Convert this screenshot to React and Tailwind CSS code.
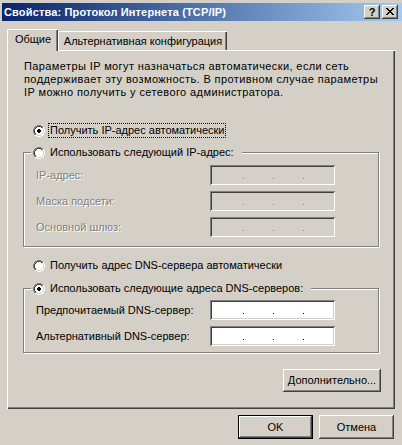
import React from 'react'

const raised = 'shadow-[inset_-1px_-1px_0_#404040,inset_1px_1px_0_#ffffff,inset_-2px_-2px_0_#808080]'
const sunken = 'shadow-[inset_1px_1px_0_#808080,inset_-1px_-1px_0_#ffffff,inset_2px_2px_0_#404040,inset_-2px_-2px_0_#d4d0c8]'
const etched = 'border border-[#808080] shadow-[inset_1px_1px_0_#ffffff,1px_1px_0_#ffffff]'
const grayText = 'text-[#808080] [text-shadow:1px_1px_0_#ffffff]'

// classic 12x12 radio, drawn pixel by pixel
function Radio({ checked }) {
  const px = []
  for (let y = 0; y < 12; y++) {
    for (let x = 0; x < 12; x++) {
      const dx = x + 0.5 - 6
      const dy = y + 0.5 - 6
      const d = Math.sqrt(dx * dx + dy * dy)
      if (d > 6) continue
      const tl = dx + dy <= 0
      let c
      if (d > 4.9) c = tl ? '#808080' : '#ffffff'
      else if (d > 3.9) c = tl ? '#404040' : '#d4d0c8'
      else c = checked && d < 2 ? '#000000' : '#ffffff'
      px.push(<rect key={y * 12 + x} x={x} y={y} width="1" height="1" fill={c} />)
    }
  }
  return (
    <svg width="12" height="12" viewBox="0 0 12 12" shapeRendering="crispEdges" className="shrink-0">
      {px}
    </svg>
  )
}

function RadioRow({ checked, focus, children, className = '' }) {
  return (
    <div className={`flex items-center h-[15px] ${className}`}>
      <Radio checked={checked} />
      <span
        className={`ml-[3px] px-px leading-[13px] border ${focus ? 'border-dotted border-black' : 'border-transparent'}`}
      >
        {children}
      </span>
    </div>
  )
}

function IpBox({ disabled }) {
  return (
    <div className={`w-[125px] h-[20px] shrink-0 ${sunken} ${disabled ? 'bg-[#d4d0c8]' : 'bg-white'}`}>
      <div className="flex gap-[29px] pl-[33px] pt-[13px]">
        {[0, 1, 2].map(i => (
          <span key={i} className={`w-px h-px ${disabled ? 'bg-[#808080]' : 'bg-black'}`} />
        ))}
      </div>
    </div>
  )
}

function Field({ label, disabled }) {
  return (
    <div className="flex items-center pl-[12px]">
      <span className={`w-[174px] leading-[13px] ${disabled ? grayText : ''}`}>{label}</span>
      <IpBox disabled={disabled} />
    </div>
  )
}

function Group({ legend, checked, children, className = '' }) {
  return (
    <div className={`ml-[15px] w-[356px] flex flex-col ${etched} ${className}`}>
      <div className="-mt-[8px] ml-[7px] pl-[2px] pr-[6px] self-start bg-[#d4d0c8]">
        <RadioRow checked={checked}>{legend}</RadioRow>
      </div>
      {children}
    </div>
  )
}

function Button({ children, isDefault, className = '' }) {
  return (
    <div
      className={`flex items-center justify-center bg-[#d4d0c8] ${raised} ${isDefault ? 'border border-black' : ''} ${className}`}
    >
      {children}
    </div>
  )
}

function CloseGlyph() {
  const rows = ['XX....XX', '.XX..XX.', '..XXXX..', '...XX...', '..XXXX..', '.XX..XX.', 'XX....XX']
  return (
    <svg width="8" height="7" viewBox="0 0 8 7" shapeRendering="crispEdges">
      {rows.flatMap((r, y) =>
        r.split('').map((ch, x) => ch === 'X' ? <rect key={`${x}-${y}`} x={x} y={y} width="1" height="1" fill="#000" /> : null)
      )}
    </svg>
  )
}

export default function App() {
  return (
    <div className="w-[402px] h-[445px] overflow-hidden bg-[#d4d0c8] pt-[3px] text-[11px] leading-[13px] text-black font-['Liberation_Sans',Arial,sans-serif]">
      {/* title bar */}
      <div className="ml-[2px] w-[400px] h-[18px] flex items-center pl-[2px] pr-[4px] bg-linear-to-r from-[#0a246a] to-[#a6caf0]">
        <span className="text-white font-bold tracking-[0.15px]">Свойства: Протокол Интернета (TCP/IP)</span>
        <div className="ml-auto flex gap-[2px]">
          <div className={`w-[16px] h-[14px] flex items-center justify-center bg-[#d4d0c8] ${raised}`}>
            <span className="font-bold leading-[12px] pb-px">?</span>
          </div>
          <div className={`w-[16px] h-[14px] flex items-start justify-center pt-[3px] pr-px bg-[#d4d0c8] ${raised}`}>
            <CloseGlyph />
          </div>
        </div>
      </div>

      <div className="mt-[8px] px-[7px]">
        {/* tabs */}
        <div className="flex items-end">
          <div className="relative z-10 -mb-px w-[51px] h-[22px] pt-[3px] text-center bg-[#d4d0c8] border-t border-l border-white shadow-[inset_-1px_0_0_#404040,inset_-2px_0_0_#808080]">
            Общие
          </div>
          <div className="w-[169px] h-[19px] pt-[3px] text-center border-t border-l border-white shadow-[inset_-1px_0_0_#404040,inset_-2px_0_0_#808080]">
            Альтернативная конфигурация
          </div>
        </div>

        {/* tab page */}
        <div className="w-[388px] h-[359px] flex flex-col border-t border-l border-white shadow-[inset_-1px_-1px_0_#404040,inset_-2px_-2px_0_#808080]">
          <p className="mt-[9px] pl-[16px] tracking-[0.4px]">
            Параметры IP могут назначаться автоматически, если сеть<br />
            поддерживает эту возможность. В противном случае параметры<br />
            IP можно получить у сетевого администратора.
          </p>

          <RadioRow checked focus className="mt-[24px] ml-[25px]">Получить IP-адрес автоматически</RadioRow>

          <Group legend="Использовать следующий IP-адрес:" className="mt-[14px] pb-[9px]">
            <div className="mt-[5px] flex flex-col gap-[6px]">
              <Field label="IP-адрес:" disabled />
              <Field label="Маска подсети:" disabled />
              <Field label="Основной шлюз:" disabled />
            </div>
          </Group>

          <RadioRow className="mt-[11px] ml-[25px]">Получить адрес DNS-сервера автоматически</RadioRow>

          <Group legend="Использовать следующие адреса DNS-серверов:" checked className="mt-[15px] pb-[6px]">
            <div className="mt-[4px] flex flex-col gap-[6px]">
              <Field label="Предпочитаемый DNS-сервер:" />
              <Field label="Альтернативный DNS-сервер:" />
            </div>
          </Group>

          <Button className="mt-[16px] self-end mr-[14px] w-[98px] h-[23px]">Дополнительно...</Button>
        </div>

        {/* dialog buttons */}
        <div className="mt-[6px] flex justify-end gap-[6px] pr-px">
          <Button isDefault className="w-[75px] h-[24px]">OK</Button>
          <Button className="w-[75px] h-[24px]">Отмена</Button>
        </div>
      </div>
    </div>
  )
}
